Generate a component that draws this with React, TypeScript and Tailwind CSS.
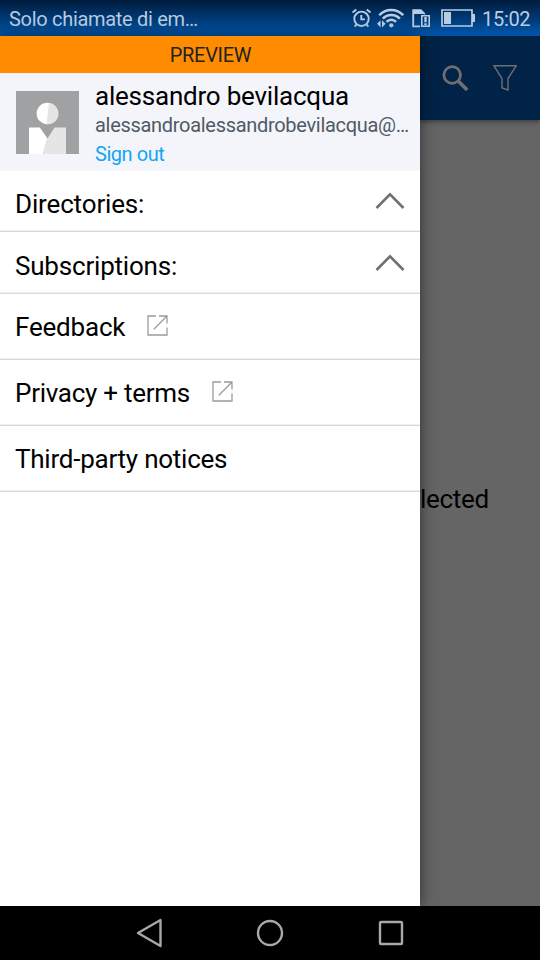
import React from "react";

interface MenuRowProps {
  label: string;
  className: string;
  children?: React.ReactNode;
}

function AlarmIcon() {
  return (
    <svg className="w-[20px] h-[20px]" viewBox="0 0 20 20" fill="none" stroke="currentColor" strokeWidth="1.9">
      <circle cx="9.500" cy="10.800" r="7.200" />
      <path d="M9.300 7v4.400h3.600" />
      <path d="M.5 4.600L4.300 1.400M18.500 4.600L14.700 1.400M4.500 16.400L2.700 18.600M14.500 16.400l1.800 2.200" />
    </svg>
  );
}

function WifiIcon() {
  return (
    <svg className="w-[27px] h-[20px]" viewBox="0 0 27 20" fill="none" stroke="currentColor" strokeWidth="2.5">
      <path d="M2.300 7.200C8.500.100 20 .100 26.200 7.200" />
      <path d="M5.800 10.700c4.500-5 12.500-5 17 0" />
      <path d="M9.500 13.800c2.700-2.900 6.900-2.900 9.600 0" />
      <circle cx="14.300" cy="17.300" r="2.100" fill="currentColor" stroke="none" />
      <path d="M0 15.800L3.600 12.200v7.200zM8.600 15.800L5 12.200v7.200z" fill="currentColor" stroke="none" />
    </svg>
  );
}

function SimIcon() {
  return (
    <svg className="w-[19px] h-[19px]" viewBox="0 0 19 19" fill="none">
      <path d="M8 17.300H1.200V1.200h7.600l4 4" stroke="currentColor" strokeWidth="1.800" />
      <path d="M1 1h8l4 4H1z" fill="currentColor" />
      <path d="M9.800 6.800h7.400v10.500H9.800z" stroke="currentColor" strokeWidth="1.600" />
      <path d="M13.500 8v5.200M13.500 14.300v2" stroke="currentColor" strokeWidth="2.400" />
    </svg>
  );
}

function BatteryIcon() {
  return (
    <svg className="w-[34px] h-[18px]" viewBox="0 0 34 18" fill="none">
      <path d="M1 1h30v16H1z" stroke="currentColor" strokeWidth="1.700" />
      <path d="M3 3h7v12H3zM31 5h3v8h-3z" fill="currentColor" />
    </svg>
  );
}

function SearchIcon() {
  return (
    <svg className="w-[27px] h-[27px]" viewBox="0 0 27 27" fill="none" stroke="currentColor">
      <circle cx="10.200" cy="10" r="8.300" strokeWidth="2.800" />
      <path d="M16.500 16.300l8.700 8.700" strokeWidth="3.600" />
    </svg>
  );
}

function FilterIcon() {
  return (
    <svg className="w-[24px] h-[26px]" viewBox="0 0 24 26" fill="none" stroke="currentColor" strokeWidth="1.400">
      <path d="M.9.800h22.200L15 13.500v11.500l-6-2v-9.500z" />
    </svg>
  );
}

function Avatar() {
  return (
    <svg className="w-[63px] h-[63px]" viewBox="0 0 63 63">
      <path d="M0 0h63v63H0z" fill="#a0a1a3" />
      <circle cx="31.300" cy="22.500" r="10.700" fill="#fff" />
      <path d="M33 11.900a10.700 10.700 0 0 1-2.500 21.300z" fill="#e5e5e5" />
      <path d="M13 36.500h10.800l7.700 11L27 63H13z" fill="#fff" />
      <path d="M50 36.500H38.500l-7 11L27 63h23z" fill="#e5e5e5" />
    </svg>
  );
}

function ExternalIcon() {
  return (
    <svg className="mb-[4px] w-[21px] h-[21px]" viewBox="0 0 21 21" fill="none" stroke="#999b9e" strokeWidth="1.300">
      <path d="M9 1H1v19h19v-7.500M12 1h8v7.500M20 1L6.800 14.200" />
    </svg>
  );
}

function ChevronUp() {
  return (
    <svg className="mb-[6px] w-[30px] h-[18px]" viewBox="0 0 30 18" fill="none" stroke="#707070" strokeWidth="2.600">
      <path d="M1.500 16L15 2.300 28.500 16" />
    </svg>
  );
}

function MenuRow({ label, className, children }: MenuRowProps) {
  return (
    <div className={`flex items-center border-b border-[#d9d9d9] px-[15px] text-[26px] leading-[30px] text-black shadow-[inset_0_-1px_0_#f0f0f0] ${className}`}>
      <span>{label}</span>
      {children}
    </div>
  );
}

export default function App() {
  return (
    <div className="flex h-[960px] w-[540px] flex-col overflow-hidden bg-black font-['Roboto',sans-serif]">
      <header className="flex h-[36px] shrink-0 items-center bg-linear-to-b from-[#001c3c] to-[#0058b0] pl-[9px] text-[#b9cce2]">
        <span className="w-[343px] pt-[2px] text-[20px] tracking-[-0.3px]">Solo chiamate di em…</span>
        <AlarmIcon />
        <span className="ml-[5px]"><WifiIcon /></span>
        <span className="ml-[8px]"><SimIcon /></span>
        <span className="ml-[10px]"><BatteryIcon /></span>
        <span className="ml-[7px] pt-[2px] text-[20px] tracking-[-0.3px]">15:02</span>
      </header>

      <main className="flex min-h-0 flex-1">
        <aside className="z-10 flex w-[420px] shrink-0 flex-col bg-white shadow-[0_0_14px_rgba(0,0,0,0.55)]">
          <div className="h-[37px] bg-[#ff8c00] pl-px text-center text-[20px] leading-[39px] tracking-[-0.3px] text-[#222]">PREVIEW</div>
          <div className="flex h-[98px] bg-[#f4f5fb] pt-[18px] pl-[16px]">
            <Avatar />
            <div className="-mt-[10px] ml-[16px] whitespace-nowrap">
              <div className="text-[26px] leading-[30px] tracking-[-0.22px] text-black">alessandro bevilacqua</div>
              <div className="text-[20px] leading-[28px] tracking-[-0.3px] text-[#505a64]">alessandroalessandrobevilacqua@…</div>
              <div className="text-[20px] leading-[30px] tracking-[-0.45px] text-[#12a5f4]">Sign out</div>
            </div>
          </div>
          <MenuRow label="Directories:" className="h-[61px] justify-between pt-[5px] tracking-[-0.15px]"><ChevronUp /></MenuRow>
          <MenuRow label="Subscriptions:" className="h-[62px] justify-between pt-[6px] tracking-[-0.2px]"><ChevronUp /></MenuRow>
          <MenuRow label="Feedback" className="h-[66px] gap-[22px] pt-[1px] tracking-[-0.2px]"><ExternalIcon /></MenuRow>
          <MenuRow label="Privacy + terms" className="h-[66px] gap-[22px] pt-[1px] tracking-[-0.27px]"><ExternalIcon /></MenuRow>
          <MenuRow label="Third-party notices" className="h-[66px] pt-[1px] tracking-[-0.24px]" />
        </aside>

        <section className="flex flex-1 flex-col bg-[#656565]">
          <div className="flex h-[84px] items-center bg-[#002347] pl-[22px] text-[#6e6f71] shadow-[0_2px_5px_rgba(0,0,0,0.4)]">
            <SearchIcon />
            <span className="ml-[24px]"><FilterIcon /></span>
          </div>
          <div className="pt-[364px] text-[26px] leading-[30px] tracking-[-0.3px] text-black">lected</div>
        </section>
      </main>

      <nav className="flex h-[54px] shrink-0 items-center justify-center gap-[94px] bg-black">
        <svg className="w-[26px] h-[30px]" viewBox="0 0 26 30" fill="none" stroke="#a9a9a9" strokeWidth="2.400" strokeLinejoin="round">
          <path d="M24.500 2v26L2 15z" />
        </svg>
        <svg className="w-[28px] h-[28px]" viewBox="0 0 28 28" fill="none" stroke="#a9a9a9" strokeWidth="2.400">
          <circle cx="14" cy="14" r="12" />
        </svg>
        <svg className="w-[26px] h-[26px]" viewBox="0 0 26 26" fill="none" stroke="#a9a9a9" strokeWidth="2.400">
          <rect x="2" y="2" width="22" height="22" rx="1" />
        </svg>
      </nav>
    </div>
  );
}
